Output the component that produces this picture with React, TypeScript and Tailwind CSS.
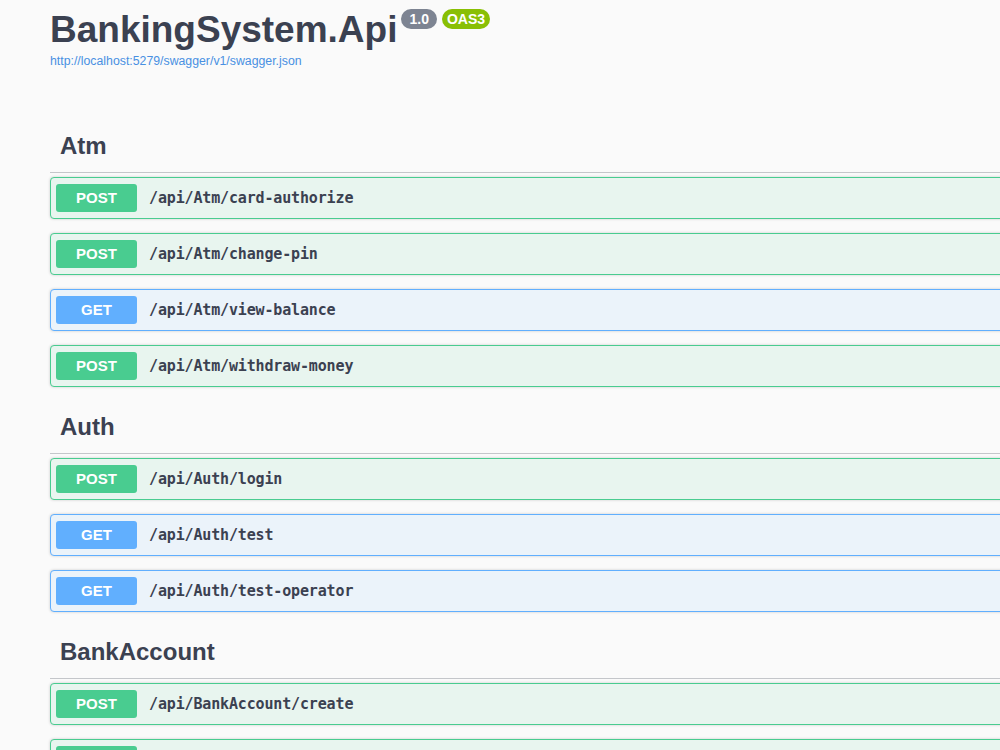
type Method = 'POST' | 'GET'

type Endpoint = { method: Method; path: string }

type Tag = { name: string; endpoints: Endpoint[] }

const tags: Tag[] = [
  {
    name: 'Atm',
    endpoints: [
      { method: 'POST', path: '/api/Atm/card-authorize' },
      { method: 'POST', path: '/api/Atm/change-pin' },
      { method: 'GET', path: '/api/Atm/view-balance' },
      { method: 'POST', path: '/api/Atm/withdraw-money' },
    ],
  },
  {
    name: 'Auth',
    endpoints: [
      { method: 'POST', path: '/api/Auth/login' },
      { method: 'GET', path: '/api/Auth/test' },
      { method: 'GET', path: '/api/Auth/test-operator' },
    ],
  },
  {
    name: 'BankAccount',
    endpoints: [
      { method: 'POST', path: '/api/BankAccount/create' },
      { method: 'POST', path: '/api/BankAccount/deposit' },
    ],
  },
]

const OpBlock = ({ endpoint }: { endpoint: Endpoint }) => {
  const isPost = endpoint.method === 'POST'
  return (
    <div
      className={`mb-[14px] flex h-[42px] items-center rounded-[4px] border px-[5px] shadow-[0_0_3px_rgba(0,0,0,0.19)] ${
        isPost ? 'border-[#49cc90] bg-[#e8f5ef]' : 'border-[#61affe] bg-[#ebf3fa]'
      }`}
    >
      <span
        className={`flex h-[28px] w-[81px] items-center justify-center rounded-[3px] text-[15px] font-bold text-white ${
          isPost ? 'bg-[#49cc90]' : 'bg-[#61affe]'
        }`}
      >
        {endpoint.method}
      </span>
      <span className="pl-[12px] font-['DejaVu_Sans_Mono',monospace] text-[15px] font-bold tracking-[-0.15px] text-[#3b4151]">
        {endpoint.path}
      </span>
    </div>
  )
}

export default function App() {
  return (
    <div className="min-h-screen overflow-hidden bg-[#fafafa] font-['Liberation_Sans',Arial,sans-serif] text-[#3b4151]">
      <div className="w-[1060px] pl-[50px]">
        {/* Info header */}
        <div className="pt-[6px]">
          <div className="flex items-start">
            <h1 className="text-[37px] font-bold leading-[48px]">BankingSystem.Api</h1>
            <span className="ml-[4px] mt-[3px] flex h-[20px] items-center rounded-full bg-[#7d8492] px-[8px] text-[14px] font-bold text-white">
              1.0
            </span>
            <span className="ml-[5px] mt-[3px] flex h-[20px] items-center rounded-full bg-[#89bf04] px-[5px] text-[14px] font-bold text-white">
              OAS3
            </span>
          </div>
          <a className="block text-[12.3px] leading-[14px] text-[#4990e2]">
            http://localhost:5279/swagger/v1/swagger.json
          </a>
        </div>

        {/* Tag sections */}
        <div className="mt-[52px]">
          {tags.map((tag) => (
            <section key={tag.name}>
              <h3 className="mb-[4px] flex h-[53px] items-center border-b border-[#c4c6ca] pl-[10px] text-[24px] font-bold">
                {tag.name}
              </h3>
              {tag.endpoints.map((ep) => (
                <OpBlock key={ep.path} endpoint={ep} />
              ))}
            </section>
          ))}
        </div>
      </div>
    </div>
  )
}
